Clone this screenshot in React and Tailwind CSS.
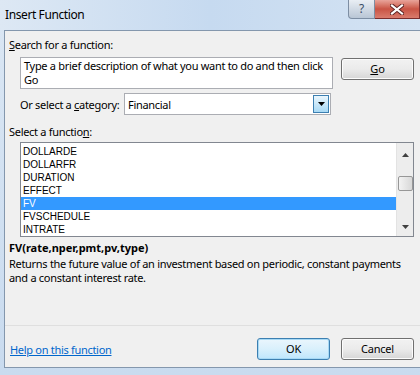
import React from "react";

const items = ["DOLLARDE", "DOLLARFR", "DURATION", "EFFECT", "FV", "FVSCHEDULE", "INTRATE"];

const ui = { fontFamily: '"Noto Sans", "Open Sans", sans-serif' };
const listFont = { fontFamily: '"Liberation Sans", Arial, sans-serif' };

function Button({ children, focused }) {
  return (
    <div
      className={
        "w-[73px] h-[22px] rounded-[3px] border flex items-center justify-center text-[11px] tracking-[-0.2px] text-black " +
        (focused
          ? "border-[#3c7fb1] bg-gradient-to-b from-[#eaf6fd] via-[#d9f0fc] to-[#bee6fd] shadow-[inset_0_0_0_1px_#a7d9f5]"
          : "border-[#707070] bg-gradient-to-b from-[#f2f2f2] via-[#ebebeb] to-[#d6d6d6] shadow-[inset_0_0_0_1px_#fcfcfc]")
      }
    >
      {children}
    </div>
  );
}

export default function App() {
  return (
    <div
      className="w-[420px] h-[375px] overflow-hidden flex flex-col bg-gradient-to-b from-[#dbe7f4] to-[#c9dbef] text-black"
      style={ui}
    >
      {/* TITLE BAR */}
      <div className="h-[30px] flex items-start bg-gradient-to-r from-[#dde8f4] via-[#c6daf0] to-[#d4e3f3]">
        <div className="pl-[5px] pt-[7px] text-[12px] leading-[16px] tracking-[-0.4px]">Insert Function</div>
        <div className="ml-auto flex">
          <div className="w-[27px] h-[19px] rounded-bl-[4px] border border-t-0 border-[#7d8ea3] bg-gradient-to-b from-[#e9eef4] to-[#b9c6d5] flex items-center justify-center text-[12px] text-[#3a4d66] leading-none">
            ?
          </div>
          <div className="w-[45px] h-[19px] border border-t-0 border-l-0 border-[#7a2d2d] bg-gradient-to-b from-[#e8a49a] via-[#c95445] to-[#d97b6d] flex items-center justify-center">
            <svg width="14" height="11" viewBox="0 0 14 11">
              <path d="M2 1.5 L12 9.5 M12 1.5 L2 9.5" stroke="#5a2020" strokeWidth="4" strokeLinecap="square" />
              <path d="M2 1.5 L12 9.5 M12 1.5 L2 9.5" stroke="#ffffff" strokeWidth="2.2" strokeLinecap="square" />
            </svg>
          </div>
        </div>
      </div>

      {/* BODY */}
      <div className="ml-[4px] h-[338px] border-l border-t border-b border-[#8497ad] bg-[#f0f0f0] flex flex-col pr-[6px] text-[11px] tracking-[-0.3px]">
        <div className="pt-[6px] pl-[4px] leading-[15px]">
          <u>S</u>earch for a function:
        </div>

        <div className="mt-[5px] ml-[15px] flex items-start">
          <div className="w-[313px] h-[32px] border border-[#abadb3] bg-white px-[3px] py-[1px] leading-[14px]">
            Type a brief description of what you want to do and then click Go
          </div>
          <div className="ml-[8px] mt-[1px]">
            <Button>
              <u>G</u>o
            </Button>
          </div>
        </div>

        <div className="mt-[4px] ml-[15px] flex items-center h-[22px]">
          <div className="w-[104px] leading-[15px] whitespace-nowrap">
            Or select a <u>c</u>ategory:
          </div>
          <div className="w-[207px] h-[22px] border border-[#abadb3] bg-white flex items-center pl-[3px] pr-[1px]">
            <span className="leading-[15px] flex-1">Financial</span>
            <div className="w-[16px] h-[18px] border border-[#3c7fb1] bg-gradient-to-b from-[#eaf6fd] to-[#a7d9f5] flex items-center justify-center">
              <svg width="7" height="4" viewBox="0 0 7 4">
                <path d="M0 0 H7 L3.5 4 Z" fill="#000" />
              </svg>
            </div>
          </div>
        </div>

        <div className="mt-[9px] pl-[4px] leading-[15px]">
          Select a functio<u>n</u>:
        </div>

        <div className="mt-[3px] ml-[15px] h-[95px] border border-[#828790] bg-white flex tracking-normal">
          <div className="flex-1 pt-[2px]" style={listFont}>
            {items.map((it) => (
              <div
                key={it}
                className={
                  "h-[13px] pl-[2px] text-[10px] leading-[13px] " +
                  (it === "FV" ? "bg-[#3399ff] text-white" : "text-black")
                }
              >
                {it}
              </div>
            ))}
          </div>
          <div className="w-[17px] bg-[#ededed] border-l border-[#e3e3e3] flex flex-col items-center">
            <div className="h-[17px] mt-[3px] flex items-center justify-center">
              <svg width="7" height="4" viewBox="0 0 7 4">
                <path d="M0 4 H7 L3.5 0 Z" fill="#404040" />
              </svg>
            </div>
            <div className="mt-[13px] w-[15px] h-[15px] rounded-[2px] border border-[#979797] bg-gradient-to-r from-[#f3f3f3] to-[#d8d8d8]" />
            <div className="mt-auto mb-[4px] h-[10px] flex items-center justify-center">
              <svg width="7" height="4" viewBox="0 0 7 4">
                <path d="M0 0 H7 L3.5 4 Z" fill="#404040" />
              </svg>
            </div>
          </div>
        </div>

        <div className="mt-[3px] pl-[4px] leading-[15px] font-bold tracking-normal">
          FV(rate,nper,pmt,pv,type)
        </div>
        <div className="mt-[2px] pl-[4px] leading-[14px]">
          Returns the future value of an investment based on periodic, constant payments and a constant interest rate.
        </div>

        <div className="mt-[40px] h-px bg-[#dfdfdf] -mr-[6px]" />

        <div className="mt-[12px] flex items-center">
          <a className="pl-[5px] leading-[15px] text-[#0066cc] underline">Help on this function</a>
          <div className="ml-auto flex gap-[11px]">
            <Button focused>OK</Button>
            <Button>Cancel</Button>
          </div>
        </div>
      </div>
    </div>
  );
}
